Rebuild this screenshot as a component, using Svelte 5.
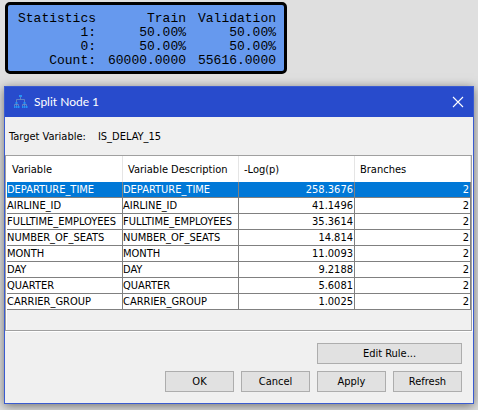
<script>
  const stats = [
    ['1:', '50.00%', '50.00%'],
    ['0:', '50.00%', '50.00%'],
    ['Count:', '60000.0000', '55616.0000'],
  ];
  const columns = ['Variable', 'Variable Description', '-Log(p)', 'Branches'];
  const rows = [
    ['DEPARTURE_TIME', '258.3676'],
    ['AIRLINE_ID', '41.1496'],
    ['FULLTIME_EMPLOYEES', '35.3614'],
    ['NUMBER_OF_SEATS', '14.814'],
    ['MONTH', '11.0093'],
    ['DAY', '9.2188'],
    ['QUARTER', '5.6081'],
    ['CARRIER_GROUP', '1.0025'],
  ];
  let selected = $state(0);
</script>

<main>
  <table class="stats">
    <thead>
      <tr><th>Statistics</th><th>Train</th><th>Validation</th></tr>
    </thead>
    <tbody>
      {#each stats as row}
        <tr>{#each row as value}<td>{value}</td>{/each}</tr>
      {/each}
    </tbody>
  </table>

  <section class="window" aria-labelledby="title">
    <header>
      <svg class="logo" width="16" height="16" viewBox="0 0 16 16" aria-hidden="true">
        <path d="M7.500 2v3.500M3.500 9V5.500h8V9M3.500 9v4M11.500 9v4M1.500 13v-2.500h4V13M9.500 13v-2.500h4V13" fill="none" stroke="#6f8fc4" stroke-opacity=".8" />
        <path d="M6 1h3v2H6zM2.500 8h2v2h-2zM10.500 8h2v2h-2zM1 12h1.500v2H1zM3 12h1.500v2H3zM5 12h1.500v2H5zM9 12h1.500v2H9zM11 12h1.500v2H11zM13 12h1.500v2H13z" fill="#2594f5" />
      </svg>
      <h1 id="title">Split Node 1</h1>
      <button class="close" aria-label="Close">
        <svg width="12" height="12" viewBox="0 0 12 12" aria-hidden="true">
          <path d="M1 1l10 10M11 1L1 11" stroke="#fff" stroke-width="1.1" />
        </svg>
      </button>
    </header>

    <div class="target"><span>Target Variable:</span><span>IS_DELAY_15</span></div>

    <div class="pane">
      <table class="grid">
        <thead>
          <tr>{#each columns as column}<th>{column}</th>{/each}</tr>
        </thead>
        <tbody>
          {#each rows as [name, logp], i}
            <tr class:selected={selected === i} onclick={() => (selected = i)}>
              <td>{name}</td><td>{name}</td><td class="num">{logp}</td><td class="num">2</td>
            </tr>
          {/each}
        </tbody>
      </table>
    </div>

    <footer>
      <button class="edit">Edit Rule...</button>
      <button class="ok">OK</button>
      <button>Cancel</button>
      <button>Apply</button>
      <button>Refresh</button>
    </footer>
  </section>
</main>

<style>
  :global(body) {
    background: #dfdfdf;
  }
  main {
    padding: 2px 4px 6px;
    color: #000;
    font: 11px/15px 'DejaVu Sans Condensed', 'Open Sans', sans-serif;
  }
  table {
    border-spacing: 0;
  }
  th,
  td {
    padding: 0;
    font-weight: normal;
  }
  .stats {
    margin-left: 1px;
    padding: 7px 8px 3px;
    border: 3px solid #000;
    border-radius: 5px;
    background: #6699ee;
    font: 13px/14px 'Liberation Mono', monospace;
    text-align: right;
  }
  .stats th,
  .stats td {
    width: 80px;
    padding-left: 10px;
  }
  .stats th:first-child,
  .stats td:first-child {
    padding-left: 0;
  }
  .window {
    margin-top: 12px;
    border: 1px solid #3a5bd0;
    background: #f0f0f0;
    box-shadow: 0 2px 10px rgba(0, 0, 0, 0.5);
  }
  header {
    display: flex;
    align-items: center;
    height: 30px;
    padding: 0 9px 0 8px;
    background: #284bcc;
    color: #fff;
  }
  h1 {
    flex: 1;
    margin: 0 0 0 5px;
    font: 12px/16px Lato, 'Open Sans', sans-serif;
  }
  .close {
    display: flex;
    width: 12px;
    height: 12px;
    padding: 0;
    border: 0;
    background: none;
  }
  .target {
    display: flex;
    gap: 12px;
    padding: 12px 4px 11px;
  }
  .pane {
    padding: 0 0 20px 1px;
    border: 1px solid #a0a0a0;
    margin-right: 1px;
    box-shadow: 1px 1px #fff, inset 1px 0 #fff;
  }
  .grid {
    width: 100%;
    table-layout: fixed;
  }
  .grid th {
    height: 26px;
    padding: 0 5px;
    border-right: 1px solid #e5e5e5;
    background: #fff;
    text-align: left;
  }
  .grid td {
    height: 15px;
    border-right: 1px solid #808080;
    border-bottom: 1px solid #808080;
    background: #fff;
    white-space: nowrap;
  }
  .grid .num {
    padding-right: 1px;
    text-align: right;
  }
  .grid .selected td {
    background: #0078d7;
    color: #fff;
  }
  footer {
    display: grid;
    grid-template-columns: repeat(4, 69px);
    justify-content: end;
    gap: 7px;
    padding: 12px 11px 11px;
  }
  footer button {
    height: 21px;
    padding: 0;
    border: 1px solid #adadad;
    background: #e1e1e1;
    color: #000;
    font: inherit;
  }
  .edit {
    grid-column: 3 / span 2;
  }
  .ok {
    grid-column: 1;
  }
</style>
